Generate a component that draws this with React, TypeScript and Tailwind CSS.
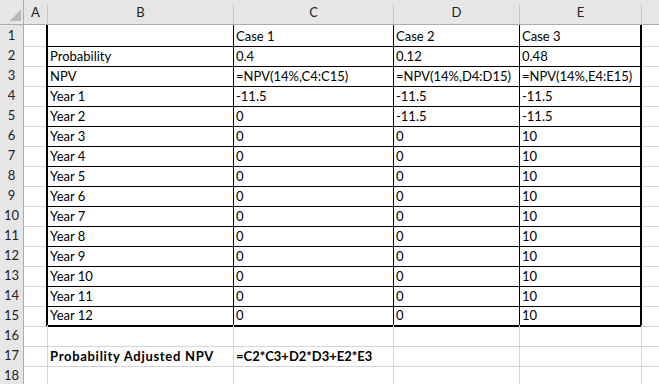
import React from 'react';

type Row = { b: string; c: string; d: string; e: string; bold?: boolean };

const rows: Row[] = [
    { b: '', c: 'Case 1', d: 'Case 2', e: 'Case 3' },
    { b: 'Probability', c: '0.4', d: '0.12', e: '0.48' },
    { b: 'NPV', c: '=NPV(14%,C4:C15)', d: '=NPV(14%,D4:D15)', e: '=NPV(14%,E4:E15)' },
    { b: 'Year 1', c: '-11.5', d: '-11.5', e: '-11.5' },
    { b: 'Year 2', c: '0', d: '-11.5', e: '-11.5' },
    ...Array.from({ length: 10 }, (_, i) => ({ b: `Year ${i + 3}`, c: '0', d: '0', e: '10' })),
    { b: '', c: '', d: '', e: '' },
    { b: 'Probability Adjusted NPV', c: '=C2*C3+D2*D3+E2*E3', d: '', e: '', bold: true },
    { b: '', c: '', d: '', e: '' },
];

const grid = 'grid grid-cols-[24px_24px_186px_160px_126px_122px_1fr]';

// column header cell with the short separator line on its right
const ColHead = ({ label, last }: { label: string; last?: boolean }) => (
    <div className="flex h-[25px] border-b border-b-[#ababab] bg-[#e6e6e6]">
        <div className="flex flex-1 items-center justify-center pt-[1px] text-[13px] text-[#222]">{label}</div>
        {!last && <div className="mt-[5px] w-px bg-[#c6c6c6]" />}
    </div>
);

const cellText = 'flex items-end overflow-visible whitespace-nowrap pb-[2px] pl-[2px] text-[13px] leading-[15px] text-black';

export default function App() {
    return (
        <div
            className="h-[384px] w-[659px] overflow-hidden bg-white"
            style={{ fontFamily: 'Lato, "Liberation Sans", sans-serif' }}
        >
            {/* Column headers */}
            <div className={grid}>
                <div className="relative h-[25px] border-r border-b border-r-[#ababab] border-b-[#ababab] bg-[#e6e6e6]">
                    <svg className="absolute left-0 top-0" width="23" height="24" viewBox="0 0 23 24">
                        <polygon points="10,21 21,21 21,9" fill="#b7b7b7" />
                    </svg>
                </div>
                <ColHead label="A" />
                <ColHead label="B" />
                <ColHead label="C" />
                <ColHead label="D" />
                <ColHead label="E" />
                <ColHead label="" last />
            </div>

            {/* Rows */}
            {rows.map((row, i) => {
                const n = i + 1;
                const inBox = n <= 15;
                const lastBox = n === 15;
                const weightB = row.bold ? 'font-bold tracking-[0.7px] text-[13.5px]' : 'font-normal';
                const weightC = row.bold ? 'font-bold tracking-[0px] text-[13.5px]' : 'font-normal';
                return (
                    <div key={n} className={`${grid} h-[20px]`}>
                        <div className="flex items-center justify-center border-r border-b border-r-[#ababab] border-b-[#d4d4d4] bg-[#e6e6e6] pt-[1px] text-[13px] text-[#222]">
                            {n}
                        </div>
                        <div
                            className={
                                inBox
                                    ? 'border-r-2 border-b border-r-black border-b-[#d4d4d4]'
                                    : 'border-r border-b border-r-[#d4d4d4] border-b-[#d4d4d4]'
                            }
                        />
                        <div
                            className={`${cellText} ${weightB} ${
                                inBox
                                    ? lastBox
                                        ? 'border-r border-b-2 border-black'
                                        : 'border-r border-b border-black'
                                    : 'border-r border-b border-[#d4d4d4]'
                            }`}
                        >
                            {row.b}
                        </div>
                        <div
                            className={`${cellText} ${weightC} ${
                                inBox
                                    ? lastBox
                                        ? 'border-r border-b-2 border-black'
                                        : 'border-r border-b border-black'
                                    : 'border-r border-b border-[#d4d4d4]'
                            }`}
                        >
                            {row.c}
                        </div>
                        <div
                            className={`${cellText} ${
                                inBox
                                    ? lastBox
                                        ? 'border-r border-b-2 border-black'
                                        : 'border-r border-b border-black'
                                    : 'border-r border-b border-[#d4d4d4]'
                            }`}
                        >
                            {row.d}
                        </div>
                        <div
                            className={`${cellText} ${
                                inBox
                                    ? lastBox
                                        ? 'border-r-2 border-b-2 border-black'
                                        : 'border-r-2 border-b border-black'
                                    : 'border-r border-b border-[#d4d4d4]'
                            }`}
                        >
                            {row.e}
                        </div>
                        <div className="border-b border-b-[#d4d4d4]" />
                    </div>
                );
            })}
        </div>
    );
}
